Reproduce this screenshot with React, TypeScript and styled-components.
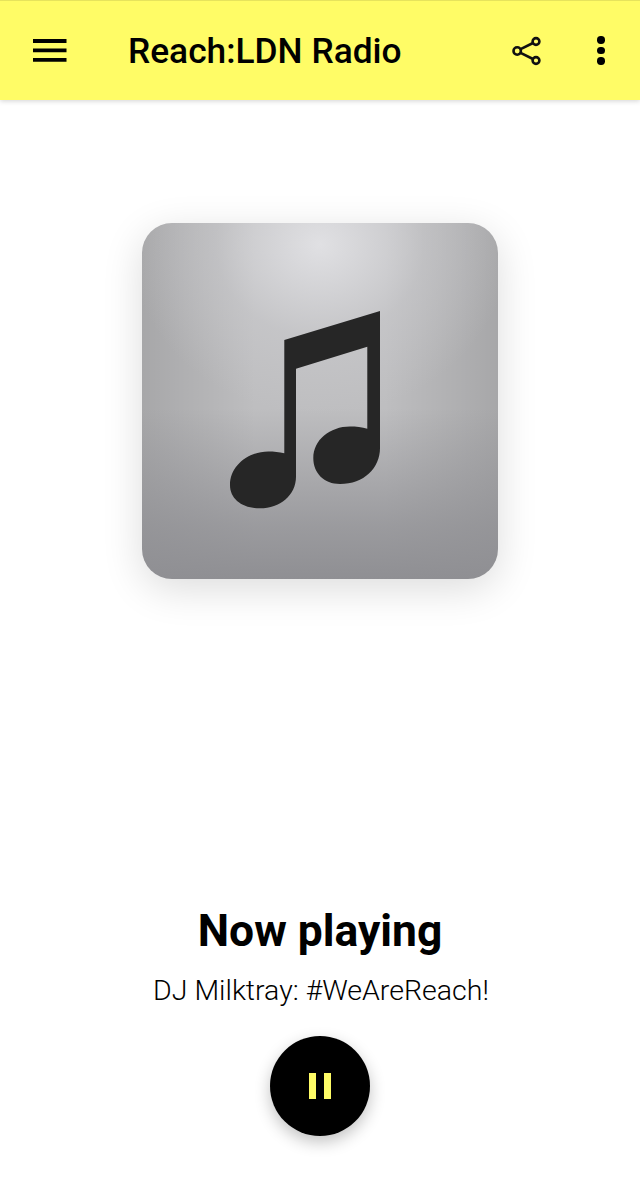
import React from 'react';
import styled, { createGlobalStyle } from 'styled-components';

const GlobalStyle = createGlobalStyle`
  html, body {
    margin: 0;
    padding: 0;
    background: #fff;
    font-family: Roboto, "Liberation Sans", sans-serif;
  }
`;

const App: React.FC = () => {
  return (
    <>
      <GlobalStyle />
      <Page>
        <Toolbar>
          <MenuButton aria-label="Menu">
            <svg width="34" height="23" viewBox="0 0 34 23">
              <path d="M0 2h33.5M0 11.4h33.5M0 20.9h33.5" stroke="#000" strokeWidth="3.8" />
            </svg>
          </MenuButton>
          <Title>Reach:LDN Radio</Title>
          <ShareButton aria-label="Share">
            <svg width="30" height="30" viewBox="0 0 30 30" fill="none" stroke="#111" strokeWidth="2.6">
              <circle cx="5.2" cy="15" r="3.7" />
              <circle cx="24" cy="5.5" r="3.4" />
              <circle cx="24" cy="24.5" r="3.4" />
              <path d="M8.6 13.2l12.4-6.2M8.6 16.8l12.4 6.2" />
            </svg>
          </ShareButton>
          <MoreButton aria-label="More">
            <Dot />
            <Dot />
            <Dot />
          </MoreButton>
        </Toolbar>
        <Main>
          <Artwork>
            <svg width="356" height="356" viewBox="0 0 356 356">
              <path
                fill="#262626"
                d="M142.3 117L238 88V225C238 245 222 261 198 261C182 261 171.3 250 171.3 235C171.3 217 188 203.5 208 203.5C214 203.5 220 204 225.3 205.7V123.7L154 145.7V253.7C154 272 138 285.3 118 285.3C100 285.3 88 276 88 262C88 243 106 228.5 126.3 228.5C132 228.5 137 229 142.3 230.3Z"
              />
            </svg>
          </Artwork>
          <NowPlaying>Now playing</NowPlaying>
          <Track>DJ Milktray: #WeAreReach!</Track>
          <PauseButton aria-label="Pause">
            <PauseBar />
            <PauseBar />
          </PauseButton>
        </Main>
      </Page>
    </>
  );
};

export default App;

const Page = styled.div`
  width: 640px;
  height: 1200px;
  display: flex;
  flex-direction: column;
  overflow: hidden;
  background: #fff;
`;

const Toolbar = styled.header`
  height: 100px;
  flex: none;
  box-sizing: border-box;
  border-top: 1px solid #e6e35c;
  display: flex;
  align-items: center;
  background: #fffc66;
  box-shadow: 0 1px 5px rgba(0, 0, 0, 0.18);
  color: #000;
  position: relative;
`;

const IconButton = styled.button`
  border: 0;
  padding: 0;
  background: none;
  display: flex;
  align-items: center;
  justify-content: center;
`;

const MenuButton = styled(IconButton)`
  margin-left: 33px;
  width: 34px;
  height: 23px;
  margin-top: -1px;
`;

const Title = styled.h1`
  margin: 1px 0 0 61px;
  flex: 1;
  font-size: 35.3px;
  font-weight: 500;
  line-height: 40px;
`;

const ShareButton = styled(IconButton)`
  width: 30px;
  height: 30px;
  margin-right: 55px;
`;

const MoreButton = styled(IconButton)`
  flex-direction: column;
  gap: 3.2px;
  width: 7.4px;
  margin-right: 35.3px;
`;

const Dot = styled.span`
  width: 7.4px;
  height: 7.4px;
  border-radius: 50%;
  background: #000;
`;

const Main = styled.main`
  flex: 1;
  display: flex;
  flex-direction: column;
  align-items: center;
`;

const Artwork = styled.div`
  width: 356px;
  height: 356px;
  margin-top: 123px;
  border-radius: 30px;
  background:
    radial-gradient(ellipse 190px 170px at 50% 6%, rgba(226, 226, 229, 0.95), rgba(205, 205, 208, 0.45) 55%, rgba(200, 200, 202, 0) 100%),
    linear-gradient(180deg, rgba(143, 143, 147, 0) 52%, rgba(143, 143, 147, 0.75) 85%, #8f8f93 100%),
    linear-gradient(90deg, rgba(0, 0, 0, 0.12), rgba(0, 0, 0, 0) 32%, rgba(0, 0, 0, 0) 68%, rgba(0, 0, 0, 0.12)),
    #bebec0;
  box-shadow: 0 10px 40px rgba(0, 0, 0, 0.14);
  svg {
    display: block;
  }
`;

const NowPlaying = styled.h2`
  margin: 324px 0 0;
  font-size: 44.4px;
  font-weight: 700;
  line-height: 56px;
  color: #000;
`;

const Track = styled.p`
  margin: 14px 0 0 2px;
  font-size: 28.5px;
  font-weight: 300;
  line-height: 36px;
  color: #000;
`;

const PauseButton = styled.button`
  margin-top: 27px;
  width: 100px;
  height: 100px;
  border: 0;
  padding: 0;
  border-radius: 50%;
  background: #000;
  box-shadow: 0 6px 16px rgba(0, 0, 0, 0.24);
  display: flex;
  align-items: center;
  justify-content: center;
  gap: 7.4px;
`;

const PauseBar = styled.span`
  width: 7.4px;
  height: 25.6px;
  background: #fffc66;
`;
